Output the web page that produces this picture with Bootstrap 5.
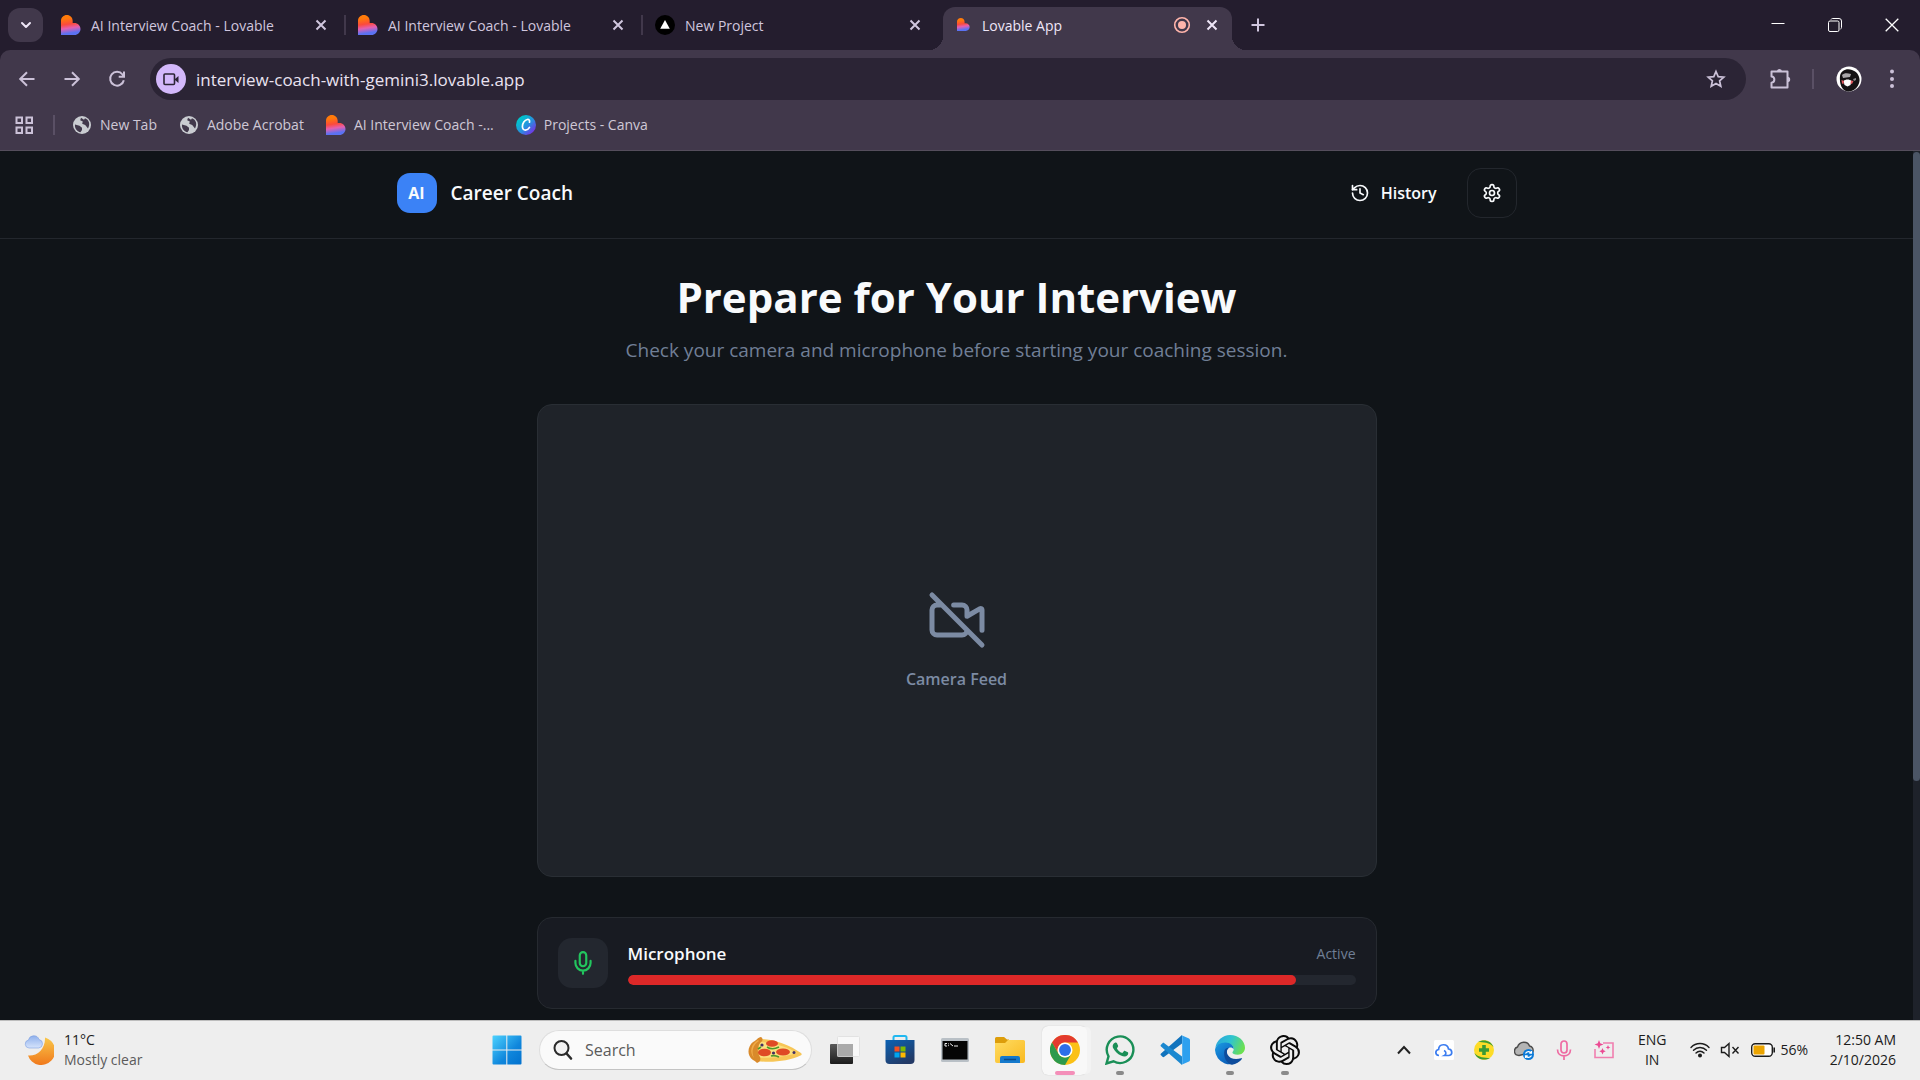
<!DOCTYPE html>
<html lang="en">
<head>
<meta charset="utf-8">
<meta name="viewport" content="width=device-width, initial-scale=1">
<title>Career Coach</title>
<link href="https://cdn.jsdelivr.net/npm/bootstrap@5.3.0/dist/css/bootstrap.min.css" rel="stylesheet">
<style>
  body { font-family: "Open Sans", "Noto Sans", sans-serif; font-size: 14px; line-height: 20px; background: #101418; }
  button { color: inherit; }
  svg { display: block; flex: none; }
  .line-ico { fill: none; stroke: currentColor; stroke-width: 2; stroke-linecap: round; stroke-linejoin: round; }
  .plain-btn { border: 0; padding: 0; background: none; display: flex; align-items: center; justify-content: center; flex: none; }

  /* browser window */
  .tab-strip { height: 50px; background: #241d2e; color: #d0c6de; }
  .tab-search { width: 35px; height: 34px; margin: 0 5px 0 8px; border-radius: 12px; background: #41384b; color: #eee6f7; }
  .tab-item { width: 297px; height: 43px; padding: 0 14px 7px 13px; position: relative; gap: 10px; margin-top: 7px; }
  .tab-sep::after { content: ""; position: absolute; right: -1px; top: 8px; width: 2px; height: 20px; background: #41384b; }
  .tab-item a { color: inherit; text-decoration: none; padding-top: 1px; }
  .tab-live { color: #eee6f7; z-index: 0; }
  .tab-live::before { content: ""; position: absolute; z-index: -1; inset: 0 4px 0 4px; background: #41384b; border-radius: 12px 12px 0 0; }
  .tab-live::after { content: ""; position: absolute; z-index: -1; bottom: 0; left: -10px; right: -10px; height: 14px;
    background: radial-gradient(circle at 0 0, transparent 14px, #41384b 14px) left / 14px 14px no-repeat,
                radial-gradient(circle at 100% 0, transparent 14px, #41384b 14px) right / 14px 14px no-repeat; }
  .tab-x { width: 20px; height: 20px; }
  .win-btn { width: 57px; height: 50px; color: #fff; }
  .toolbar-wrap { background: #241d2e; }
  .toolbar-body { background: #41384b; border-radius: 10px 10px 0 0; border-bottom: 1px solid #554e5c; color: #cbc1d8; }
  .tool-row { padding: 8px 10px 0 9px; }
  .nav-keys { gap: 9px; }
  .tool-btn { width: 36px; height: 36px; }
  .omni { height: 42px; border-radius: 21px; background: #2b2435; padding: 0 12px 0 6px; margin: 0 16px 0 15px; }
  .omni input { background: none; border: 0; outline: 0; color: #e9e2f0; font-size: 17px; line-height: 24px; padding: 1px 0 0; margin: 0 8px 0 10px; }
  .cam-chip { width: 30px; height: 30px; border-radius: 50%; background: #d3b8fb; color: #2b2435; }
  .v-rule { width: 2px; height: 20px; background: #5a5065; }
  .tool-rule { margin: 0 18px 0 14px; }
  .mark-row { height: 50px; padding: 0 14px; gap: 22px; }
  .mark-row .v-rule { margin: 0 -5px 0 -3px; }
  .mark-row a { color: #cfc8d6; text-decoration: none; gap: 8px; }

  /* coaching page */
  .page-area { min-height: 0; }
  .page-body { color: #f8fafc; }
  .app-header { border-bottom: 1px solid #23272d; padding: 17px 0 20px; }
  .wrap-wide { max-width: 1120px; }
  .wrap-main { max-width: 840px; }
  .brand-row { gap: 14px; }
  .brand-tile { width: 40px; height: 40px; border-radius: 13px; background: #3b82f6; font-size: 16px; font-weight: 700; }
  .brand-name { font-size: 19px; line-height: 24px; font-weight: 600; }
  .history-btn { font-size: 16px; line-height: 24px; font-weight: 600; gap: 11px; margin-right: 30px; }
  .gear-btn { width: 50px; height: 50px; border: 1px solid #23272d; border-radius: 14px; }
  .hero-title { font-size: 42px; line-height: 50px; font-weight: 700; margin: 33px 0 14px; }
  .hero-sub { font-size: 19px; line-height: 28px; color: #707f96; margin: 0 0 40px; }
  .feed-box { aspect-ratio: 840 / 473; background: #1f2329; border: 1px solid #292e34; border-radius: 15px; color: #7c8ba3; gap: 17px; margin-bottom: 40px; font-size: 16px; line-height: 24px; font-weight: 600; }
  .mic-box { background: #181b22; border: 1px solid #262a30; border-radius: 15px; padding: 20px; gap: 20px; }
  .mic-tile { width: 50px; height: 50px; border-radius: 14px; background: #23272f; color: #22c55e; }
  .mic-info { padding-top: 2px; }
  .mic-name { font-size: 17px; line-height: 22px; font-weight: 600; }
  .mic-state { color: #707f96; }
  .level-bar { height: 10px; border-radius: 5px; background: #23272f; margin-top: 10px; }
  .level-bar .progress-bar { background: #dc2828; border-radius: 5px; }
  .scroll-track { width: 7px; background: #1e222a; }
  .scroll-thumb { height: 629px; margin-top: 1px; border-radius: 4px; background: #4b5565; }

  /* taskbar */
  .task-bar { height: 60px; background: #eee; border-top: 1px solid #bdbdbd; color: #1c1c1c; padding-bottom: 1px; }
  .weather { width: 484px; padding-left: 24px; gap: 10px; }
  .weather small { color: #5b5b5b; font-size: 14px; }
  .task-apps, .status-set { gap: 10px; }
  .task-btn { width: 45px; height: 49px; border-radius: 6px; position: relative; }
  .task-on { background: #f8f8f8; box-shadow: 5px 0 0 -1px #f3f3f3, 0 0 1px #bbb; }
  .task-btn[data-run]::after { content: ""; position: absolute; bottom: 0; width: 8px; height: 4px; border-radius: 2px; background: #8a8a8a; }
  .task-btn.task-on::after { width: 20px; background: #f48fb9; }
  .find-box { width: 273px; height: 40px; border-radius: 20px; background: #fafafa; border: 1px solid #dedede; border-bottom-color: #c4c4c4; padding: 0 8px 0 12px; gap: 11px; }
  .find-box input { border: 0; background: none; outline: 0; padding: 0; font-size: 16px; width: 110px; }
  .find-box input::placeholder { color: #5b5b5b; opacity: 1; }
  .tray { padding-right: 24px; gap: 20px; }
  .clock { min-width: 68px; }
</style>
<script src="https://cdn.jsdelivr.net/npm/bootstrap@5.3.0/dist/js/bootstrap.bundle.min.js"></script>
</head>
<body class="vh-100 d-flex flex-column overflow-hidden">

<svg width="0" height="0" class="position-absolute" aria-hidden="true">
  <defs>
    <linearGradient id="gLove" x1=".35" y1="0" x2=".5" y2="1"><stop offset=".15" stop-color="#ff7a0a"/><stop offset=".45" stop-color="#fb4a3c"/><stop offset=".65" stop-color="#e55fb0"/><stop offset=".9" stop-color="#5b72f2"/></linearGradient>
    <linearGradient id="gCanva" x1="0" y1="0" x2="1" y2="1"><stop offset=".2" stop-color="#00c4cc"/><stop offset=".55" stop-color="#2a8de0"/><stop offset=".9" stop-color="#7d2ae8"/></linearGradient>
    <linearGradient id="gMoon" x1="0" y1="0" x2="0" y2="1"><stop offset="0" stop-color="#f9c74a"/><stop offset="1" stop-color="#f0791c"/></linearGradient>
    <linearGradient id="gCloud" x1="0" y1="0" x2="0" y2="1"><stop offset="0" stop-color="#8fb0ec"/><stop offset="1" stop-color="#d5e3fb"/></linearGradient>
    <linearGradient id="gWin" gradientUnits="userSpaceOnUse" x1="0" y1="0" x2="30" y2="30"><stop offset="0" stop-color="#4fd4ff"/><stop offset=".6" stop-color="#0f86dc"/><stop offset="1" stop-color="#0270cd"/></linearGradient>
    <linearGradient id="gStore" x1="0" y1="0" x2=".6" y2="1"><stop offset="0" stop-color="#0b62b4"/><stop offset="1" stop-color="#233a66"/></linearGradient>
    <linearGradient id="gFold" x1="0" y1="0" x2="1" y2="1"><stop offset="0" stop-color="#ffdc62"/><stop offset="1" stop-color="#f9b91f"/></linearGradient>
    <linearGradient id="gDark" x1="0" y1="0" x2="0" y2="1"><stop offset="0" stop-color="#5a5a5a"/><stop offset="1" stop-color="#1b1b1b"/></linearGradient>
    <linearGradient id="gEdgeTop" x1="0" y1=".2" x2="1" y2=".5"><stop offset="0" stop-color="#2aa5dc"/><stop offset=".5" stop-color="#2fc4cf"/><stop offset="1" stop-color="#6ce04f"/></linearGradient>
    <linearGradient id="gEdgeLow" x1="0" y1="0" x2="1" y2="1"><stop offset="0" stop-color="#1b9de2"/><stop offset=".5" stop-color="#0f6fc8"/><stop offset="1" stop-color="#0c4fa0"/></linearGradient>
    <symbol id="love" viewBox="0 0 24 24"><path fill="url(#gLove)" d="M7 0c3.900 0 7 3.100 7 7v2.600h2.200c3.900 0 7.200 3.200 7.200 7.200s-3.300 7.200-7.200 7.200H0V7c0-3.900 3.100-7 7-7z"/></symbol>
    <symbol id="cross" viewBox="0 0 20 20"><path d="M5.500 5.500l9 9M14.500 5.500l-9 9" fill="none" stroke="currentColor" stroke-width="2"/></symbol>
    <symbol id="globe" viewBox="0 0 20 20"><circle cx="10" cy="10" r="9" fill="#c9ccd1"/><path fill="#41384b" d="M3 9.500l4.500 1.200 2.500 2v2.300l-1.500 2.300C5 16.500 2.500 13.500 3 9.500zM9 2.700l-.8 2.500 2.600 1.400-.6 2.200 3 1.200 2.800 3.500C18.500 9 17 4.500 13 3.200l-1 1.600z"/></symbol>
    <symbol id="mic" viewBox="0 0 24 24"><path d="M12 2a3 3 0 0 0-3 3v7a3 3 0 0 0 6 0V5a3 3 0 0 0-3-3Z"/><path d="M19 10v2a7 7 0 0 1-14 0v-2M12 19v3"/></symbol>
  </defs>
</svg>

<header>
  <!-- tabs -->
  <div class="tab-strip d-flex align-items-center">
    <button class="plain-btn tab-search" aria-label="Search tabs"><svg width="14" height="14" viewBox="0 0 14 14" class="line-ico"><path d="M3 5l4 4 4-4"/></svg></button>
    <div class="tab-item tab-sep d-flex align-items-center">
      <svg width="20" height="20"><use href="#love"/></svg>
      <a href="#" class="flex-grow-1 text-nowrap">AI Interview Coach - Lovable</a>
      <button class="plain-btn tab-x" aria-label="Close tab"><svg width="20" height="20"><use href="#cross"/></svg></button>
    </div>
    <div class="tab-item tab-sep d-flex align-items-center">
      <svg width="20" height="20"><use href="#love"/></svg>
      <a href="#" class="flex-grow-1 text-nowrap">AI Interview Coach - Lovable</a>
      <button class="plain-btn tab-x" aria-label="Close tab"><svg width="20" height="20"><use href="#cross"/></svg></button>
    </div>
    <div class="tab-item d-flex align-items-center">
      <svg width="20" height="20" viewBox="0 0 20 20"><circle cx="10" cy="10" r="10" fill="#000"/><path d="M10 5l4.800 8.800H5.200z" fill="#fff"/></svg>
      <a href="#" class="flex-grow-1 text-nowrap">New Project</a>
      <button class="plain-btn tab-x" aria-label="Close tab"><svg width="20" height="20"><use href="#cross"/></svg></button>
    </div>
    <div class="tab-item tab-live d-flex align-items-center">
      <svg width="20" height="20" viewBox="0 0 20 20"><use href="#love" x="5" y="3" width="13" height="13"/></svg>
      <a href="#" class="flex-grow-1 text-nowrap">Lovable App</a>
      <svg width="20" height="20" viewBox="0 0 20 20"><circle cx="10" cy="10" r="7.300" fill="none" stroke="#ffb4ab" stroke-width="1.600"/><circle cx="10" cy="10" r="4" fill="#ffb4ab"/></svg>
      <button class="plain-btn tab-x" aria-label="Close tab"><svg width="20" height="20"><use href="#cross"/></svg></button>
    </div>
    <button class="plain-btn ms-2 px-1" aria-label="New tab"><svg width="20" height="20" viewBox="0 0 20 20"><path d="M10 3.500v13M3.500 10h13" stroke="currentColor" stroke-width="2"/></svg></button>
    <div class="ms-auto d-flex">
      <button class="plain-btn win-btn" aria-label="Minimize"><svg width="14" height="14" viewBox="0 0 14 14"><path d="M.5 5.500h13" stroke="currentColor"/></svg></button>
      <button class="plain-btn win-btn" aria-label="Restore"><svg width="14" height="14" viewBox="0 0 14 14" fill="none" stroke="currentColor"><rect x=".5" y="3" width="10.500" height="10.500" rx="1.500"/><path d="M3 1.500C3.300.8 4 .5 4.500.5H11A2.500 2.500 0 0 1 13.500 3v6.500c0 .7-.4 1.300-1 1.500"/></svg></button>
      <button class="plain-btn win-btn" aria-label="Close"><svg width="14" height="14" viewBox="0 0 14 14"><path d="M.7.7l12.600 12.600M13.300.7L.7 13.300" stroke="currentColor" stroke-width="1.300"/></svg></button>
    </div>
  </div>

  <!-- toolbar and bookmarks -->
  <div class="toolbar-wrap"><div class="toolbar-body">
    <div class="tool-row d-flex align-items-center">
      <div class="nav-keys d-flex">
        <button class="plain-btn tool-btn" aria-label="Back"><svg width="20" height="20" viewBox="0 0 20 20" fill="none" stroke="currentColor" stroke-width="2"><path d="M17.500 10H4M10 3.200L3.200 10l6.800 6.800"/></svg></button>
        <button class="plain-btn tool-btn" aria-label="Forward"><svg width="20" height="20" viewBox="0 0 20 20" fill="none" stroke="currentColor" stroke-width="2"><path d="M2.500 10H16M10 3.200l6.800 6.800-6.800 6.800"/></svg></button>
        <button class="plain-btn tool-btn" aria-label="Reload"><svg width="20" height="20" viewBox="0 0 20 20" fill="none" stroke="currentColor" stroke-width="2"><path d="M16.800 11.200A6.900 6.900 0 1 1 15.500 5.500L17 7.300M17 2.500v5.300h-5.300"/></svg></button>
      </div>
      <div class="omni d-flex align-items-center flex-grow-1">
        <button class="plain-btn cam-chip" aria-label="Camera in use"><svg width="18" height="18" viewBox="0 0 18 18"><rect x="2" y="4" width="10.500" height="10.500" rx="1" fill="none" stroke="currentColor" stroke-width="1.600"/><path fill="currentColor" d="M13 9l3.500-3v7L13 10z"/></svg></button>
        <input type="text" aria-label="Address" class="flex-grow-1" value="interview-coach-with-gemini3.lovable.app">
        <button class="plain-btn tool-btn" aria-label="Bookmark this tab"><svg width="20" height="20" viewBox="0 0 20 20"><path fill="none" stroke="currentColor" stroke-width="1.700" d="M10 2.500l2.200 5.100 5.600.5-4.200 3.700 1.200 5.500-4.800-2.900-4.800 2.900 1.200-5.500-4.200-3.700 5.600-.5z"/></svg></button>
      </div>
      <button class="plain-btn tool-btn" aria-label="Extensions"><svg width="24" height="24" viewBox="0 0 24 24"><path fill="none" stroke="currentColor" stroke-width="2" stroke-linejoin="round" d="M3.500 4.500h16v16h-16v-4.800c3.800-.3 3.800-6 0-6.300z"/><path fill="currentColor" d="M9 4.500a2.500 2.500 0 0 1 5 0zM19.500 9.800a2.700 2.700 0 0 1 0 5.400z"/></svg></button>
      <span class="v-rule tool-rule"></span>
      <button class="plain-btn mx-1" aria-label="Profile"><svg width="26" height="26" viewBox="0 0 26 26"><circle cx="13" cy="13" r="12.500" fill="#fff"/><path fill="#141214" d="M4 10C5 4 11 2 16 4c5 1.500 8 6 7.500 11-.5 5-4.500 9.500-9 10.300C8 26.500 3 21 4 10z"/><path fill="#a9a7aa" d="M6 9c2-2 5-2 9-1l-1 3-7 1z"/><path fill="#fff" d="M7.500 15c2-2 6-2 8 0l-1 4L11.500 20.500 8.500 19z"/><path fill="#e35b62" d="M5.500 14l2.500 1-.5 3-1.500-.5zM15 14.500l2.500.5-1.500 3-1.500-.5z"/><path fill="#8b898c" d="M17 13l3-1v2l-2 1z"/></svg></button>
      <button class="plain-btn tool-btn ms-2" aria-label="Menu"><svg width="20" height="24" viewBox="0 0 20 24" fill="currentColor"><circle cx="10" cy="4.500" r="2"/><circle cx="10" cy="12" r="2"/><circle cx="10" cy="19" r="2"/></svg></button>
    </div>
    <nav class="mark-row d-flex align-items-center text-nowrap">
      <button class="plain-btn" aria-label="Tab groups"><svg width="20" height="20" viewBox="0 0 20 20" fill="none" stroke="currentColor" stroke-width="2"><path d="M2.500 2.500h5.500v5.500H2.500zM12.500 2.500h5.500v5.500h-5.500zM2.500 12.500h5.500v5.500H2.500zM12.500 12.500h5.500v5.500h-5.500z"/></svg></button>
      <span class="v-rule"></span>
      <a href="#" class="d-flex align-items-center"><svg width="20" height="20"><use href="#globe"/></svg>New Tab</a>
      <a href="#" class="d-flex align-items-center"><svg width="20" height="20"><use href="#globe"/></svg>Adobe Acrobat</a>
      <a href="#" class="d-flex align-items-center"><svg width="20" height="20"><use href="#love"/></svg>AI Interview Coach -...</a>
      <a href="#" class="d-flex align-items-center"><svg width="20" height="20" viewBox="0 0 20 20"><circle cx="10" cy="10" r="10" fill="url(#gCanva)"/><path d="M13.500 7.200c.5-1.800-.6-3-2.200-2.700-2.800.5-4.900 4-4.900 7 0 2.400 1.300 3.700 3.100 3.600 1.800-.1 3.200-1.300 4-2.700" fill="none" stroke="#fff" stroke-width="1.700" stroke-linecap="round"/></svg>Projects - Canva</a>
    </nav>
  </div></div>
</header>

<div class="page-area flex-grow-1 d-flex overflow-hidden">
  <div class="page-body flex-grow-1 overflow-hidden">
    <div class="app-header">
      <div class="wrap-wide mx-auto d-flex align-items-center justify-content-between">
        <div class="brand-row d-flex align-items-center">
          <span class="brand-tile d-flex align-items-center justify-content-center">AI</span>
          <span class="brand-name">Career Coach</span>
        </div>
        <div class="d-flex align-items-center">
          <button class="plain-btn history-btn"><svg width="20" height="20" viewBox="0 0 24 24" class="line-ico"><path d="M3 12a9 9 0 1 0 9-9 9.750 9.750 0 0 0-6.740 2.740L3 8"/><path d="M3 3v5h5M12 7v5l4 2"/></svg>History</button>
          <button class="plain-btn gear-btn" aria-label="Settings"><svg width="20" height="20" viewBox="0 0 24 24" class="line-ico"><path d="M12.220 2h-.44a2 2 0 0 0-2 2v.18a2 2 0 0 1-1 1.730l-.43.25a2 2 0 0 1-2 0l-.15-.08a2 2 0 0 0-2.730.73l-.22.38a2 2 0 0 0 .73 2.730l.15.1a2 2 0 0 1 1 1.720v.51a2 2 0 0 1-1 1.740l-.15.09a2 2 0 0 0-.73 2.730l.22.38a2 2 0 0 0 2.730.73l.15-.08a2 2 0 0 1 2 0l.43.25a2 2 0 0 1 1 1.730V20a2 2 0 0 0 2 2h.44a2 2 0 0 0 2-2v-.18a2 2 0 0 1 1-1.730l.43-.25a2 2 0 0 1 2 0l.15.08a2 2 0 0 0 2.730-.73l.22-.39a2 2 0 0 0-.73-2.730l-.15-.08a2 2 0 0 1-1-1.740v-.5a2 2 0 0 1 1-1.740l.15-.09a2 2 0 0 0 .73-2.730l-.22-.38a2 2 0 0 0-2.730-.73l-.15.08a2 2 0 0 1-2 0l-.43-.25a2 2 0 0 1-1-1.730V4a2 2 0 0 0-2-2z"/><circle cx="12" cy="12" r="3"/></svg></button>
        </div>
      </div>
    </div>
    <main class="wrap-main mx-auto">
      <div class="text-center">
        <h1 class="hero-title">Prepare for Your Interview</h1>
        <p class="hero-sub">Check your camera and microphone before starting your coaching session.</p>
      </div>
      <section class="feed-box d-flex flex-column align-items-center justify-content-center">
        <svg width="60" height="60" viewBox="0 0 24 24" class="line-ico"><path d="M10.660 6H14a2 2 0 0 1 2 2v2.500l5.248-3.062A.5.5 0 0 1 22 7.870v8.196M16 16a2 2 0 0 1-2 2H4a2 2 0 0 1-2-2V8a2 2 0 0 1 2-2h2M2 2l20 20"/></svg>
        <span>Camera Feed</span>
      </section>
      <section class="mic-box d-flex align-items-center">
        <span class="mic-tile d-flex align-items-center justify-content-center"><svg width="26" height="26" class="line-ico"><use href="#mic"/></svg></span>
        <div class="mic-info flex-grow-1">
          <div class="d-flex align-items-center justify-content-between">
            <span class="mic-name" id="micName">Microphone</span>
            <span class="mic-state">Active</span>
          </div>
          <div class="progress level-bar" role="progressbar" aria-labelledby="micName" aria-valuenow="92" aria-valuemin="0" aria-valuemax="100"><div class="progress-bar" style="width:91.800%"></div></div>
        </div>
      </section>
    </main>
  </div>
  <div class="scroll-track"><div class="scroll-thumb"></div></div>
</div>

<footer class="task-bar d-flex align-items-center flex-shrink-0">
  <div class="weather d-flex align-items-center">
    <svg width="30" height="30" viewBox="0 0 30 30"><path fill="url(#gMoon)" d="M21 2.500A14 14 0 1 1 4 20.500C13 21.500 21.500 14 21 2.500z"/><path fill="url(#gCloud)" d="M5 13a4 4 0 0 1-.6-7.900A5.500 5.500 0 0 1 15 4.500a4.300 4.300 0 0 1-.3 8.500z" stroke="#7d9fe0" stroke-width=".6"/></svg>
    <div><div>11°C</div><small class="d-block">Mostly clear</small></div>
  </div>
  <div class="task-apps d-flex align-items-center">
    <button class="plain-btn task-btn" aria-label="Start"><svg width="30" height="30" viewBox="0 0 30 30" fill="url(#gWin)"><path d="M.5 1.500a1 1 0 0 1 1-1h12.800v14H.5zM15.300.5h13.200a1 1 0 0 1 1 1v13H15.300zM.5 15.500h13.800v14H1.500a1 1 0 0 1-1-1zM15.300 15.500h14.200v13a1 1 0 0 1-1 1H15.300z"/></svg></button>
    <div class="find-box d-flex align-items-center">
      <svg width="22" height="22" viewBox="0 0 22 22" fill="#f3f3f3" stroke="#2b2b2b"><circle cx="9.500" cy="9" r="7" stroke-width="2"/><path d="M14.500 14.500l4.500 5" stroke-width="2.600" stroke-linecap="round"/></svg>
      <input type="text" aria-label="Search" placeholder="Search">
      <svg width="56" height="28" viewBox="0 0 56 28" class="ms-auto"><path fill="#f7c657" d="M11 3c14-1 32 6 43 14 1 1 1 2-.5 2.500C42 25 25 27 10 25z"/><path fill="#fbe07f" d="M12 6c12 0 29 5 38 11-12 4-27 5.500-38 4.500z"/><path fill="#d98a2b" d="M14 1c2 1 2 4 0 5-4 4-4 11-1 15 1 3 0 5-3 6-1-1-2-2-4-3C-1 19 1 10 6 6c3-1 5-5 8-5z"/><path fill="#f0ab48" d="M11 4C4 8 2 16 7 22c-3-7-1-13 5-17z"/><g fill="#df4a25"><ellipse cx="25" cy="7.500" rx="6" ry="3.200"/><ellipse cx="17.500" cy="16.500" rx="6.500" ry="3.800"/><ellipse cx="36" cy="16" rx="7" ry="3.500"/></g><g fill="none" stroke="#4c9a2a" stroke-width="1.600"><path d="M20 11c3 2 8 2 12 0M24 20c3-1 6 0 8 1M11 13l3-2"/></g><g fill="#453062"><circle cx="15" cy="9" r="1.600"/><circle cx="26.500" cy="17" r="1.600"/><circle cx="47" cy="16.500" r="1.500"/></g></svg>
    </div>
    <button class="plain-btn task-btn" aria-label="Task view"><svg width="30" height="30" viewBox="0 0 30 30"><rect x="0" y="9" width="23" height="20" rx="1" fill="url(#gDark)"/><rect x="7.500" y="1.500" width="22" height="20" rx="1" fill="#f8f8f8" stroke="#e2e2e2"/><rect x="7.500" y="9" width="15.500" height="12.500" fill="#aaa"/></svg></button>
    <button class="plain-btn task-btn" aria-label="Store"><svg width="30" height="30" viewBox="0 0 30 30"><path d="M8.500 6V2.500a1.500 1.500 0 0 1 1.500-1.500h10a1.500 1.500 0 0 1 1.500 1.500V6" fill="none" stroke="#20b8f0" stroke-width="2"/><path d="M.5 5h29v20a4 4 0 0 1-4 4h-21a4 4 0 0 1-4-4z" fill="url(#gStore)"/><path fill="#f25022" d="M9.500 11.500h5v5h-5z"/><path fill="#7fba00" d="M15.500 11.500h5v5h-5z"/><path fill="#00a4ef" d="M9.500 17.500h5v5h-5z"/><path fill="#ffb900" d="M15.500 17.500h5v5h-5z"/></svg></button>
    <button class="plain-btn task-btn" aria-label="Terminal"><svg width="30" height="30" viewBox="0 0 30 30"><rect x="1" y="3" width="28" height="24" rx="1.500" fill="#b9c0c6"/><rect x="2.500" y="6" width="25" height="18.500" fill="#050505"/><path d="M7 8.500H5v2.500h2M8.500 8.500v.8M8.500 10.300v.8M10 8.500l3 2.500M14 11h4" stroke="#eee" fill="none"/></svg></button>
    <button class="plain-btn task-btn" aria-label="File Explorer"><svg width="30" height="30" viewBox="0 0 30 30"><path fill="#dd9d0a" d="M0 3.500A1.500 1.500 0 0 1 1.500 2H9l3 2.500h2V9H0z"/><path fill="url(#gFold)" d="M0 8h10l3-3h15.500A1.500 1.500 0 0 1 30 6.500V26a2 2 0 0 1-2 2H2a2 2 0 0 1-2-2z"/><path fill="#1579cc" d="M5 28v-5a2 2 0 0 1 2-2h16a2 2 0 0 1 2 2v5z"/><path d="M9 24.500h12" stroke="#0b4b8a" stroke-width="1.500"/></svg></button>
    <button class="plain-btn task-btn task-on" data-run aria-label="Chrome"><svg width="30" height="30" viewBox="0 0 48 48"><circle cx="24" cy="24" r="24" fill="#fbc116"/><path fill="#e33b2e" d="M3.200 12A24 24 0 0 1 44.800 12H24a12 12 0 0 0-10.400 18z"/><path fill="#2d9a4b" d="M3.200 12A24 24 0 0 0 24 48l10.400-18A12 12 0 0 1 13.600 30z"/><circle cx="24" cy="24" r="12" fill="#fff"/><circle cx="24" cy="24" r="9.500" fill="#2d6fe8"/></svg></button>
    <button class="plain-btn task-btn" data-run aria-label="WhatsApp"><svg width="30" height="30" viewBox="0 0 30 30"><path d="M1.500 28.500l2-7.200a13.300 13.300 0 1 1 5 5z" fill="none" stroke="#1a8f57" stroke-width="2.400"/><path fill="#1a8f57" d="M10.300 7.500c.7-.2 1.400 0 1.700.7l1.100 2.600c.2.500 0 1-.8 2-.4.400-.4.700-.1 1.100 1.100 1.800 2.600 3.100 4.500 3.900.5.200.8.100 1.100-.2l1.200-1.500c.3-.4.600-.4 1.100-.2l2.800 1.400c.5.300.5 2-.5 3-1.500 1.500-3.500 1.500-6.500.3-3.300-1.400-6-4.300-7.500-7-1.400-2.500-.5-5.200 1.900-6.100z"/></svg></button>
    <button class="plain-btn task-btn" aria-label="VS Code"><svg width="30" height="30" viewBox="0 0 30 30"><path fill="#1173bd" d="M22 0L1 18.500c-.6.600-.6 1.300 0 1.800l1.500 1.500c.6.500 1.200.5 1.800 0L22 8.500z"/><path fill="#1b88d0" d="M22 30L1 11.500c-.6-.6-.6-1.300 0-1.800L2.500 8.200c.6-.5 1.200-.5 1.800 0L22 21.500z"/><path fill="#2da0ef" d="M21 0l8 3.500c.6.300 1 .9 1 1.600v19.800c0 .7-.4 1.300-1 1.600L21 30c1-.5 1.200-1 1.200-1.800V1.800C22.200 1 22 .5 21 0z"/></svg></button>
    <button class="plain-btn task-btn" data-run aria-label="Edge"><svg width="30" height="30" viewBox="0 0 30 30"><path fill="url(#gEdgeTop)" d="M.3 13A15 15 0 0 1 15 0c8.500 0 15 6 15 12.800 0 4.200-3.200 7-7.200 7-3.600 0-5.400-1.200-5.400-2.200 0-.9 1.300-1.200 1.300-3.600 0-2.700-2.500-5.500-7-5.500C6.500 8.500 2 10 .3 13z"/><path fill="url(#gEdgeLow)" d="M0 15C.3 10.500 5 7.500 10.500 7.500c5 0 8.200 3 8.200 6.500-1.200-1.500-3-2-4.500-1.300-2.500 1.200-3.200 4.500-1.700 8C14.500 25 20 27 26 24.500A15 15 0 0 1 0 15z"/><path fill="#0d4c9c" d="M9.500 15.500c.5-1.800 2.300-3 4.700-2.800-2.500 1.200-2.800 4.500-1.500 7 2 4 7.500 5.300 13.500 3.500.8-.2 1.200.3.700.9A15 15 0 0 1 17 29.800c-6-1.300-9-9-7.500-14.300z"/></svg></button>
    <button class="plain-btn task-btn" data-run aria-label="ChatGPT"><svg width="30" height="30" viewBox="0 0 24 24"><path fill="#0a0a0a" d="M22.282 9.821a5.985 5.985 0 0 0-.516-4.910 6.046 6.046 0 0 0-6.510-2.900A6.065 6.065 0 0 0 4.981 4.182a5.985 5.985 0 0 0-3.998 2.900 6.046 6.046 0 0 0 .743 7.097 5.980 5.980 0 0 0 .511 4.911 6.051 6.051 0 0 0 6.515 2.900A5.985 5.985 0 0 0 13.260 24a6.056 6.056 0 0 0 5.772-4.206 5.989 5.989 0 0 0 3.998-2.900 6.056 6.056 0 0 0-.748-7.073zM13.260 22.430a4.476 4.476 0 0 1-2.876-1.041l.142-.080 4.778-2.758a.795.795 0 0 0 .393-.681v-6.737l2.020 1.169a.071.071 0 0 1 .038.052v5.583a4.504 4.504 0 0 1-4.495 4.494zM3.599 18.304a4.471 4.471 0 0 1-.535-3.014l.142.085 4.783 2.758a.771.771 0 0 0 .781 0l5.843-3.369v2.332a.080.080 0 0 1-.033.062L9.740 19.950a4.499 4.499 0 0 1-6.141-1.646zM2.341 7.896a4.485 4.485 0 0 1 2.366-1.973V11.600a.766.766 0 0 0 .388.677l5.814 3.354-2.020 1.169a.076.076 0 0 1-.071 0l-4.830-2.787A4.504 4.504 0 0 1 2.341 7.872zm16.596 3.856L13.104 8.364 15.119 7.200a.076.076 0 0 1 .071 0l4.830 2.791a4.494 4.494 0 0 1-.677 8.104v-5.677a.790.790 0 0 0-.407-.667zm2.011-3.023l-.142-.085-4.774-2.782a.776.776 0 0 0-.785 0L9.409 9.230V6.897a.066.066 0 0 1 .028-.062l4.830-2.787a4.499 4.499 0 0 1 6.680 4.660zM8.307 12.863l-2.020-1.164a.080.080 0 0 1-.038-.057V6.074a4.499 4.499 0 0 1 7.376-3.454l-.142.081L8.704 5.459a.795.795 0 0 0-.393.681zm1.097-2.365l2.602-1.500 2.607 1.500v2.999l-2.597 1.500-2.607-1.500z"/></svg></button>
  </div>
  <div class="tray ms-auto d-flex align-items-center text-nowrap">
    <button class="plain-btn" aria-label="Show hidden icons"><svg width="20" height="20" viewBox="0 0 20 20"><path d="M4 13.500L10 7l6 6.500" fill="none" stroke="#222" stroke-width="2"/></svg></button>
    <svg width="20" height="20" viewBox="0 0 20 20"><rect width="20" height="20" rx="1.500" fill="#fff"/><path d="M5 15.500c-4.300-.3-4-5.500-.4-6C4.800 3.500 13.500 3 14.500 9c4 .2 4.500 5.800.5 6.500h-4.500c1.800-1 2-4-.5-5" fill="none" stroke="#3c7df0" stroke-width="1.700"/></svg>
    <svg width="20" height="20" viewBox="0 0 20 20"><circle cx="10" cy="10" r="10" fill="#fddc27"/><path fill="#3a9b35" d="M4 2C9-1 17 0 19.500 7 16 2.500 9 2 4 2zM16 18C11 21 3 20 .5 13 4 17.500 11 18 16 18zM8.200 5h3.600v3.200H15v3.600h-3.200V15H8.200v-3.200H5V8.200h3.200z"/></svg>
    <svg width="20" height="20" viewBox="0 0 20 20"><path d="M5 15.500C-1 15-.5 8 3.500 7 5.500.5 14 1 15.500 6c3 .5 4 3 3.500 6z" fill="#b4b4b4" stroke="#4b4b4b" stroke-width="1.400"/><circle cx="14.500" cy="14.500" r="5.500" fill="#0b7ad8"/><path d="M11.500 13.500c1-2.300 4.500-2.500 5.700-.6M17.500 11v2.200h-2.200M17.500 15.500c-1 2.300-4.500 2.500-5.700.6M11.500 18v-2.200h2.200" fill="none" stroke="#fff" stroke-width="1.200"/></svg>
    <svg width="20" height="20" viewBox="0 0 20 20" fill="none" stroke="#ee6ba2" stroke-width="1.700"><rect x="7" y="1" width="6" height="12" rx="3"/><path d="M3.500 9.500c0 8.500 13 8.500 13 0M10 16v4"/></svg>
    <svg width="20" height="20" viewBox="0 0 20 20"><path d="M9 3h10v14.500H1V9" fill="none" stroke="#f07fb0" stroke-width="1.600"/><path fill="#ec4a93" d="M5 0l1.200 3.300L9.500 4.500 6.200 5.700 5 9 3.800 5.700.5 4.500l3.300-1.200zM8.500 8l1 2.200 2.200 1-2.200 1-1 2.300-1-2.300-2.200-1 2.200-1zM14 5l.7 1.700 1.700.7-1.700.7L14 9.800l-.7-1.700-1.700-.7 1.700-.7z"/></svg>
    <div class="text-center px-1"><div>ENG</div><div>IN</div></div>
    <div class="status-set d-flex align-items-center">
      <svg width="20" height="20" viewBox="0 0 20 20" fill="none" stroke="#1c1c1c" stroke-width="1.400" stroke-linecap="round"><path d="M1 7.500c5-5.300 13-5.300 18 0M3.500 10.300c3.600-3.800 9.400-3.800 13 0M6 13c2.300-2.400 5.700-2.400 8 0"/><circle cx="10" cy="15.500" r="1.300" fill="#1c1c1c"/></svg>
      <svg width="20" height="20" viewBox="0 0 20 20" fill="none" stroke="#1c1c1c" stroke-width="1.400"><path d="M1.500 7.500h3L9 3.500v13l-4.500-4h-3zM12.500 7l6 6.500M18.500 7l-6 6.500"/></svg>
      <span class="d-flex align-items-center gap-1"><svg width="26" height="20" viewBox="0 0 26 20"><rect x="1.700" y="3.700" width="20.600" height="12.600" rx="3.500" fill="#fff" stroke="#1c1c1c" stroke-width="1.400"/><rect x="3.500" y="5.500" width="11" height="9" rx="1" fill="#eba400"/><path d="M24.200 7.500v5" stroke="#1c1c1c" stroke-width="1.600"/></svg>56%</span>
    </div>
    <div class="clock text-end"><div>12:50 AM</div><div>2/10/2026</div></div>
  </div>
</footer>
</body>
</html>
